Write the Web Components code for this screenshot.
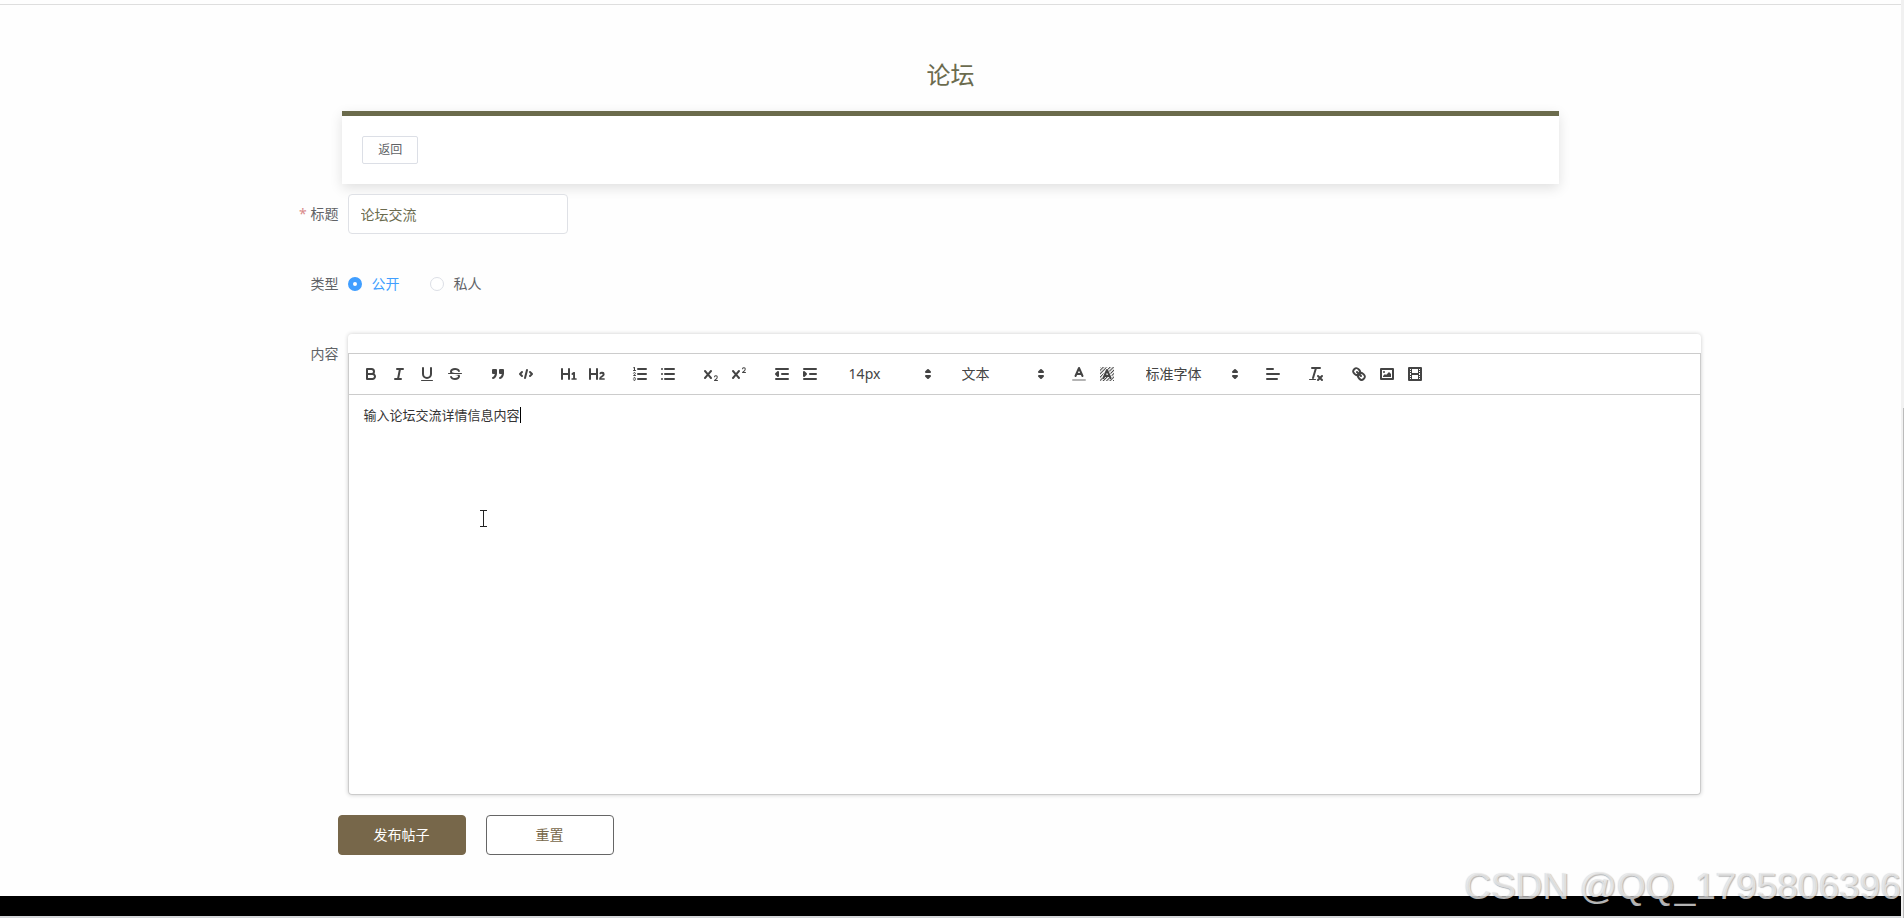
<!DOCTYPE html>
<html lang="zh-CN">
<head>
<meta charset="utf-8">
<title>论坛</title>
<style>
html,body{margin:0;background:#fefefe}
body{font:14px/20px "Noto Sans","Noto Sans CJK SC",sans-serif;color:#606266}
</style>
</head>
<body>
<forum-page>
  <forum-card>论坛</forum-card>
  <post-form></post-form>
</forum-page>
<script>
class BaseElement extends HTMLElement {
  connectedCallback() {
    if (this.shadowRoot) return;
    this.attachShadow({ mode: 'open' }).innerHTML =
      '<style>*{box-sizing:border-box}button,input,select{font:inherit;color:inherit;margin:0}' + this.css() + '</style>' + this.html();
  }
}

customElements.define('forum-page', class extends BaseElement {
  css() { return `
    :host{display:grid;grid-template-columns:1fr 3px;min-height:100vh;position:relative;box-sizing:border-box;overflow:hidden}
    .view{display:flex;flex-direction:column;min-width:0;padding-top:4px}
    .main{border-top:1px solid #dedede;padding:48px 0 40px;flex:1}
    .foot{height:20px;background:#000}
    .edge{height:2px;background:#d5d7da}
    .track{background:#f1f1f1;display:flex;flex-direction:column;align-items:flex-end;padding-top:408px}
    .thumb{width:1px;flex:1;background:#bbb}
    .mark{position:absolute;right:3px;bottom:11px;font:37px/40px "Liberation Sans",sans-serif;color:rgba(240,240,240,.75);text-shadow:1px 1px 1px rgba(0,0,0,.28),-1px 0 1px rgba(0,0,0,.12);white-space:nowrap}
  `; }
  html() { return `
    <div class="view"><main class="main"><slot></slot></main><div class="foot"></div><div class="edge"></div></div>
    <div class="track"><div class="thumb"></div></div>
    <div class="mark">CSDN @QQ_1795806396</div>`; }
});

customElements.define('forum-card', class extends BaseElement {
  css() { return `
    :host{display:block;width:64%;margin:0 auto}
    h1{font-size:24px;line-height:44px;font-weight:400;text-align:center;color:#6b6b4e;margin:0 0 14px}
    .card{border-top:5px solid #6b6b4c;background:#fff;padding:20px;display:flex;box-shadow:0 4px 12px rgba(0,0,0,.12)}
    button{font-size:12px;line-height:16px;padding:5px 15px;height:28px;border:1px solid #dcdfe6;border-radius:2px;background:#fff;color:#606266}
  `; }
  html() { return `<h1><slot></slot></h1><div class="card"><button type="button">返回</button></div>`; }
});

customElements.define('post-form', class extends BaseElement {
  css() { return `
    :host{display:block;width:79%;margin:10px auto 0}
    .row{display:grid;grid-template-columns:139px 1fr;column-gap:9px;min-height:40px;align-items:center;margin-bottom:30px}
    .row.top{align-items:start;margin-bottom:20px}
    .label{text-align:right;line-height:40px;color:#606266}
    .req::before{content:"*";color:#d98a8a;margin-right:4px}
    input[type=text]{width:220px;height:40px;padding:0 12px;border:1px solid #dfe1e6;border-radius:4px;background:#fff;color:#6b6b4e;outline:0}
    .radios{display:flex;gap:30px}
    .radios label{display:flex;align-items:center;gap:10px}
    input[type=radio]{appearance:none;width:14px;height:14px;border:1px solid #dcdfe6;border-radius:50%;background:#fff}
    input[type=radio]:checked{border:5px solid #409eff}
    input[type=radio]:checked + span{color:#409eff}
    .actions{display:flex;gap:20px;margin-left:138px}
    .actions button{width:128px;height:40px;border-radius:4px;border:1px solid #77674a;background:#77674a;color:#fff}
    .actions button[type=reset]{background:#fff;color:#77674a;border-color:#666}
  `; }
  html() { return `<form>
    <div class="row"><label class="label req" for="title">标题</label><div><input id="title" type="text" value="论坛交流"></div></div>
    <div class="row"><span class="label" id="kind">类型</span>
      <div class="radios" role="radiogroup" aria-labelledby="kind">
        <label><input type="radio" name="kind" checked><span>公开</span></label>
        <label><input type="radio" name="kind"><span>私人</span></label>
      </div></div>
    <div class="row top"><span class="label">内容</span><rich-editor>输入论坛交流详情信息内容</rich-editor></div>
    <div class="actions"><button type="submit">发布帖子</button><button type="reset">重置</button></div>
  </form>`; }
});

const ICONS = {
  bold: ['加粗', '<path class="s" d="M5,4H9.5A2.5,2.5,0,0,1,12,6.5v0A2.5,2.5,0,0,1,9.5,9H5V4Z"/><path class="s" d="M5,9h5.5A2.5,2.5,0,0,1,13,11.5v0A2.5,2.5,0,0,1,10.5,14H5V9Z"/>'],
  italic: ['斜体', '<path class="s" d="M7 4H13M5 14H11M8 14L10 4"/>'],
  underline: ['下划线', '<path class="s" d="M5,3V9a4.012,4.012,0,0,0,4,4H9a4.012,4.012,0,0,0,4-4V3"/><rect class="f" height="1" rx=".5" width="12" x="3" y="15"/>'],
  strike: ['删除线', '<path class="s t" d="M15.5 8.5H2.5"/><path class="f" d="M9.007,8C6.542,7.791,6,7.519,6,6.5,6,5.792,7.283,5,9,5c1.571,0,2.765.679,2.969,1.309a1,1,0,0,0,1.9-.617C13.356,4.106,11.354,3,9,3,6.2,3,4,4.538,4,6.5a3.2,3.2,0,0,0,.5,1.843Z"/><path class="f" d="M8.984,10C11.457,10.208,12,10.479,12,11.5c0,0.708-1.283,1.5-3,1.5-1.571,0-2.765-.679-2.969-1.309a1,1,0,1,0-1.9.617C4.644,13.894,6.646,15,9,15c2.8,0,5-1.538,5-3.5a3.2,3.2,0,0,0-.5-1.843Z"/>'],
  quote: ['引用', '<rect class="f s" height="3" width="3" x="4" y="5"/><rect class="f s" height="3" width="3" x="11" y="5"/><path class="f s" d="M7,8c0,4.031-3,5-3,5"/><path class="f s" d="M14,8c0,4.031-3,5-3,5"/>'],
  code: ['代码', '<path class="s" d="M5 7L3 9L5 11M13 7L15 9L13 11M10 5L8 13"/>'],
  h1: ['标题 1', '<path class="f" d="M10,4V14a1,1,0,0,1-2,0V10H3v4a1,1,0,0,1-2,0V4A1,1,0,0,1,3,4V8H8V4a1,1,0,0,1,2,0Zm6.06787,9.209H14.98975V7.59863a.54085.54085,0,0,0-.605-.60547h-.62744a1.01119,1.01119,0,0,0-.748.29688L11.645,8.56641a.5435.5435,0,0,0-.022.8584l.28613.30762a.53861.53861,0,0,0,.84717.0332l.09912-.08789a1.2137,1.2137,0,0,0,.2417-.35254h.02246s-.01123.30859-.01123.60547V13.209H12.041a.54085.54085,0,0,0-.605.60547v.43945a.54085.54085,0,0,0,.605.60547h4.02686a.54085.54085,0,0,0,.605-.60547v-.43945A.54085.54085,0,0,0,16.06787,13.209Z"/>'],
  h2: ['标题 2', '<path class="f" d="M16.73975,13.81445v.43945a.54085.54085,0,0,1-.605.60547H11.855a.58392.58392,0,0,1-.64893-.60547V14.0127c0-2.90527,3.39941-3.42187,3.39941-4.55469a.77675.77675,0,0,0-.84717-.78125,1.17684,1.17684,0,0,0-.83594.38477c-.2749.26367-.561.374-.85791.13184l-.4292-.34082c-.30811-.24219-.38525-.51758-.1543-.81445a2.97155,2.97155,0,0,1,2.45361-1.17676,2.45393,2.45393,0,0,1,2.68408,2.40918c0,2.45312-3.1792,2.92676-3.27832,3.93848h2.79443A.54085.54085,0,0,1,16.73975,13.81445ZM9,3A.99974.99974,0,0,0,8,4V8H3V4A1,1,0,0,0,1,4V14a1,1,0,0,0,2,0V10H8v4a1,1,0,0,0,2,0V4A.99974.99974,0,0,0,9,3Z"/>'],
  ordered: ['有序列表', '<path class="s" d="M7 4H15M7 9H15M7 14H15"/><path class="s t" d="M2.5 5.5H4.5"/><path class="f" d="M3.5,6A0.5,0.5,0,0,1,3,5.5V3.085l-0.276.138A0.5,0.5,0,0,1,2.053,3c-0.124-.247-0.023-0.324.224-0.447l1-.5A0.5,0.5,0,0,1,4,2.5v3A0.5,0.5,0,0,1,3.5,6Z"/><path class="s t" d="M4.5,10.5h-2c0-.234,1.85-1.076,1.85-2.234A0.959,0.959,0,0,0,2.5,8.156"/><path class="s t" d="M2.5,14.846a0.959,0.959,0,0,0,1.85-.109A0.7,0.7,0,0,0,3.75,14a0.688,0.688,0,0,0,.6-0.736,0.959,0.959,0,0,0-1.85-.109"/>'],
  bullet: ['无序列表', '<path class="s" d="M6 4H15M6 9H15M6 14H15M3 4V4M3 9V9M3 14V14"/>'],
  sub: ['下标', '<path class="f" d="M15.5,15H13.861a3.858,3.858,0,0,0,1.914-2.975,1.8,1.8,0,0,0-1.6-1.751A1.921,1.921,0,0,0,12.021,11.7a0.50013,0.50013,0,1,0,.957.291h0a0.914,0.914,0,0,1,1.053-.725,0.81,0.81,0,0,1,.744.762c0,1.076-1.16971,1.86982-1.93971,2.43082A1.45639,1.45639,0,0,0,12,15.5a0.5,0.5,0,0,0,.5.5h3A0.5,0.5,0,0,0,15.5,15Z"/><path class="f" d="M9.65,5.241a1,1,0,0,0-1.409.108L6,7.964,3.759,5.349A1,1,0,0,0,2.192,6.59178Q2.21541,6.6213,2.241,6.649L4.684,9.5,2.241,12.35A1,1,0,0,0,3.71,13.70722q0.02557-.02768.049-0.05722L6,11.036,8.241,13.65a1,1,0,1,0,1.567-1.24277Q9.78459,12.3777,9.759,12.35L7.316,9.5,9.759,6.651A1,1,0,0,0,9.65,5.241Z"/>'],
  sup: ['上标', '<path class="f" d="M15.5,7H13.861a4.015,4.015,0,0,0,1.914-2.975,1.8,1.8,0,0,0-1.6-1.751A1.922,1.922,0,0,0,12.021,3.7a0.5,0.5,0,1,0,.957.291,0.917,0.917,0,0,1,1.053-.725,0.81,0.81,0,0,1,.744.762c0,1.077-1.164,1.925-1.934,2.486A1.423,1.423,0,0,0,12,7.5a0.5,0.5,0,0,0,.5.5h3A0.5,0.5,0,0,0,15.5,7Z"/><path class="f" d="M9.651,5.241a1,1,0,0,0-1.41.108L6,7.964,3.759,5.349a1,1,0,1,0-1.519,1.3L4.683,9.5,2.241,12.35a1,1,0,1,0,1.519,1.3L6,11.036,8.241,13.65a1,1,0,0,0,1.519-1.3L7.317,9.5,9.759,6.651A1,1,0,0,0,9.651,5.241Z"/>'],
  outdent: ['减少缩进', '<path class="s" d="M3 14H15M3 4H15M9 9H15"/><path class="f s" d="M5 7V11L3 9Z"/>'],
  indent: ['增加缩进', '<path class="s" d="M3 14H15M3 4H15M9 9H15"/><path class="f s" d="M3 7V11L5 9Z"/>'],
  color: ['文字颜色', '<path class="s" style="opacity:.4" d="M3 15H15"/><path class="s" d="M5.5 11L9 3L12.5 11M11.63 9H6.38"/>'],
  background: ['背景颜色', '<defs><pattern id="h" width="2.4" height="2.4" patternUnits="userSpaceOnUse" patternTransform="rotate(45)"><rect width="1" height="2.4" fill="#444"/></pattern></defs><rect x="2" y="2" width="14" height="14" fill="url(#h)"/><path d="M5 13L9 5L13 13" fill="none" stroke="#fff" stroke-width="3"/><path class="s" d="M5.5 13L9 5L12.5 13M11.6 11H6.4"/>'],
  align: ['对齐', '<path class="s" d="M3 9H15M3 14H13M3 4H9"/>'],
  clean: ['清除格式', '<path class="s" d="M5 3H13M6 13L9 3M11 11L15 15M15 11L11 15"/><rect class="f" height="1" rx=".5" width="7" x="2" y="14"/>'],
  link: ['链接', '<path class="s" d="M7 7L11 11"/><path class="s" d="M8.9,4.577a3.476,3.476,0,0,1,.36,4.679A3.476,3.476,0,0,1,4.577,8.9C3.185,7.5,2.035,6.4,4.217,4.217S7.5,3.185,8.9,4.577Z"/><path class="s" d="M13.423,9.1a3.476,3.476,0,0,0-4.679-.36,3.476,3.476,0,0,0,.36,4.679c1.392,1.392,2.5,2.542,4.679.36S14.815,10.5,13.423,9.1Z"/>'],
  image: ['图片', '<rect class="s" height="10" width="12" x="3" y="4"/><circle class="f" cx="6" cy="7" r="1"/><path class="f" d="M5 12V11L7 9L8 10L11 7L13 9V12Z"/>'],
  video: ['视频', '<rect class="s" height="12" width="12" x="3" y="3"/><path class="f" d="M5 3H6V15H5ZM12 3H13V15H12ZM5 8H13V10H5ZM3 5H6V6H3ZM3 7H6V8H3ZM3 10H6V11H3ZM3 12H6V13H3ZM12 5H15V6H12ZM12 7H15V8H12ZM12 10H15V11H12ZM12 12H15V13H12Z"/>']
};

customElements.define('tool-button', class extends BaseElement {
  css() { return `
    :host{display:block}
    button{display:block;width:28px;height:24px;padding:3px 5px;border:0;background:none}
    svg{display:block;width:18px;height:18px}
    .s{fill:none;stroke:#444;stroke-width:2;stroke-linecap:round;stroke-linejoin:round}
    .f{fill:#444}.f.s{fill:#444}.t{stroke-width:1}
  `; }
  html() {
    const [label, art] = ICONS[this.getAttribute('icon')];
    return `<button type="button" aria-label="${label}"><svg viewBox="0 0 18 18">${art}</svg></button>`;
  }
});

customElements.define('tool-picker', class extends BaseElement {
  css() { return `
    :host{display:grid;width:98px;height:24px;align-items:center}
    :host([wide]){width:108px}
    select,svg{grid-area:1/1}
    select{appearance:none;width:100%;height:24px;border:0;background:none;padding:0 20px 0 10px;color:#444;line-height:24px}
    svg{width:18px;height:18px;justify-self:end;pointer-events:none}
    path{fill:#444;stroke:#444;stroke-width:2;stroke-linejoin:round}
  `; }
  html() { return `<select aria-label="${this.getAttribute('label')}"><option>${this.getAttribute('value')}</option></select>
    <svg viewBox="0 0 18 18"><path d="M7 11L9 13L11 11Z"/><path d="M7 7L9 5L11 7Z"/></svg>`; }
});

customElements.define('rich-editor', class extends BaseElement {
  css() { return `
    :host{display:block;min-width:0;padding-top:19px;border-radius:4px;box-shadow:0 0 4px rgba(0,0,0,.2);background:#fff}
    .bar{display:flex;flex-wrap:wrap;gap:15px;padding:8px;border:1px solid #ccc}
    .group{display:flex}
    .area{border:1px solid #ccc;border-top:0;min-height:400px;padding:12px 15px;font-size:13px;line-height:16px;color:#333;outline:0;position:relative;border-radius:0 0 4px 4px}
    .text{border-right:1px solid #000;display:inline-block;outline:0}
    .pointer{position:absolute;left:130px;top:115px;width:9px;height:17px}
    .pointer path{fill:none;stroke:#222}
  `; }
  html() {
    const group = names => `<div class="group">${names.split(' ').map(n => `<tool-button icon="${n}"></tool-button>`).join('')}</div>`;
    return `<div class="bar" role="toolbar">
      ${['bold italic underline strike', 'quote code', 'h1 h2', 'ordered bullet', 'sub sup', 'outdent indent'].map(group).join('')}
      <tool-picker label="字号" value="14px"></tool-picker>
      <tool-picker label="段落" value="文本"></tool-picker>
      ${group('color background')}
      <tool-picker wide label="字体" value="标准字体"></tool-picker>
      ${['align', 'clean', 'link image video'].map(group).join('')}
    </div>
    <div class="area"><div class="text" contenteditable="true" role="textbox" aria-label="内容"><slot></slot></div>
      <svg class="pointer" viewBox="0 0 9 17"><path d="M1 .5H8M4.5 .5V16.5M1 16.5H8"/></svg></div>`;
  }
});
</script>
</body>
</html>
